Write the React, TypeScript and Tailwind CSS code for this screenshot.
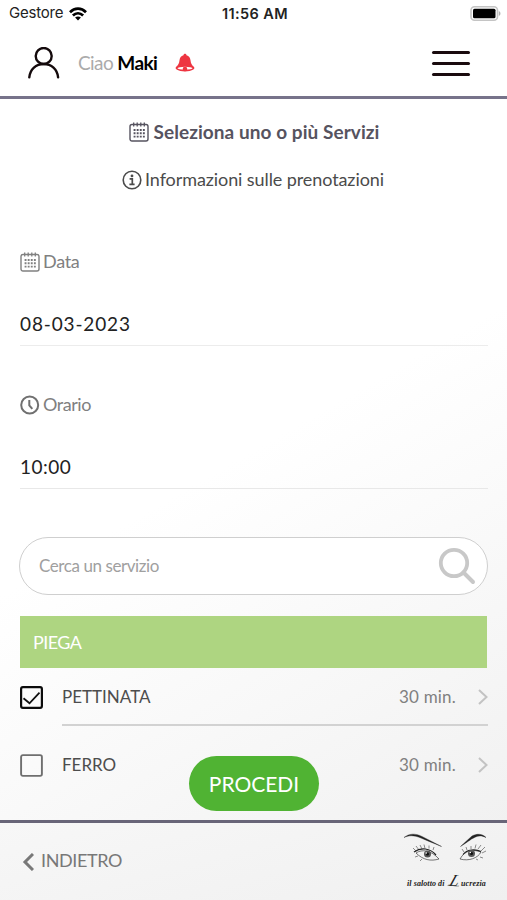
import React, { useState } from 'react';

interface Service {
  id: number;
  name: string;
  duration: string;
}

const SERVICES: Service[] = [
  { id: 1, name: 'PETTINATA', duration: '30 min.' },
  { id: 2, name: 'FERRO', duration: '30 min.' },
];

function WifiIcon() {
  return (
    <svg className="w-[18px] h-[14px] ml-1.5" viewBox="0 0 18 14" fill="none" stroke="#000" strokeWidth="2.7">
      <path d="M1 5.2C5.6.5 12.4.5 17 5.2" />
      <path d="M3.900 8.500c3-2.900 7.200-2.900 10.200 0" />
      <path d="M6.100 10.500c1.700-1.400 4.100-1.400 5.800 0L9 13.500z" fill="#000" stroke="none" />
    </svg>
  );
}

function BatteryIcon() {
  return (
    <svg className="w-[31px] h-[15px]" viewBox="0 0 31 15">
      <rect x="1" y=".8" width="26.500" height="13.400" rx="3.500" fill="#fff" stroke="#c4c4c4" strokeWidth="1.600" />
      <rect x="3" y="2.800" width="22.500" height="9.400" rx="1.500" fill="#000" />
      <path d="M28.800 5c2.200 1 2.200 4 0 5z" fill="#b0b0b0" />
    </svg>
  );
}

function UserIcon() {
  return (
    <svg className="w-8 h-8" viewBox="0 0 32 32" fill="none" stroke="#140a0c" strokeWidth="2.400" strokeLinecap="round">
      <circle cx="15.700" cy="9" r="8" />
      <path d="M1.300 30.300C2.100 22.100 8 17 15.700 17S29.300 22.100 30.100 30.300" />
    </svg>
  );
}

function BellIcon() {
  return (
    <svg className="w-5 h-5" viewBox="0 0 20 20">
      <path
        d="M10 .8c.8 0 1.400.6 1.500 1.400 2.500.8 3.700 2.500 4 5 .4 3.400 1.200 4.600 3.300 6.600.9.900.8 2-.4 2.700C14.500 19 5.500 19 1.600 16.500c-1.200-.7-1.300-1.800-.4-2.700 2.100-2 2.900-3.200 3.300-6.600.3-2.500 1.500-4.200 4-5C8.600 1.400 9.200.8 10 .8z"
        fill="#ee3541"
      />
      <ellipse cx="10" cy="15.200" rx="7.500" ry="1.400" fill="#fff" />
      <circle cx="10" cy="16" r="2.300" fill="#ee3541" />
    </svg>
  );
}

function CalendarIcon({ className }: { className: string }) {
  return (
    <svg className={className} viewBox="0 0 20 20" fill="none" stroke="currentColor">
      <rect x="1" y="2.500" width="18" height="16.500" rx="2" strokeWidth="1.400" />
      <path d="M4.700.5v4M8.200.5v4M11.800.5v4M15.300.5v4" strokeWidth="1.300" />
      <path d="M4.600 8h11.200M4.600 11.300h11.200M4.600 14.600h11.200" strokeWidth="1.900" strokeDasharray="1.900 1.200" />
    </svg>
  );
}

function InfoIcon() {
  return (
    <svg className="w-5 h-5 mt-[2px]" viewBox="0 0 20 20" fill="none" stroke="#4b4b4b">
      <circle cx="10" cy="10" r="8.800" strokeWidth="1.600" />
      <circle cx="10" cy="5.900" r="1.400" fill="#4b4b4b" stroke="none" />
      <path d="M7.600 8.900h2.700v5.200M7.400 14.400h5.200" strokeWidth="1.700" />
    </svg>
  );
}

function ClockIcon() {
  return (
    <svg className="w-5 h-5 mt-[2px]" viewBox="0 0 20 20" fill="none" stroke="#707070">
      <circle cx="9.700" cy="10" r="8.500" strokeWidth="2" />
      <path d="M9.300 5v5.300l3 3.600" strokeWidth="2" />
    </svg>
  );
}

function SearchIcon() {
  return (
    <svg className="w-[38px] h-[38px]" viewBox="0 0 38 38" fill="none" stroke="#c8c8c8">
      <circle cx="16" cy="16" r="13.200" strokeWidth="3.800" />
      <path d="M25.500 25.500L35 35" strokeWidth="4" strokeLinecap="round" />
    </svg>
  );
}

function Checkbox({ checked, onClick }: { checked: boolean; onClick: () => void }) {
  return (
    <button onClick={onClick} className="w-[23px] h-[23px]">
      <svg className="w-[23px] h-[23px]" viewBox="0 0 23 23" fill="none">
        <rect
          x="1.100"
          y="1.100"
          width="20.800"
          height="20.800"
          rx="1.800"
          stroke={checked ? '#0c0c0c' : '#6f6f6f'}
          strokeWidth={checked ? 2.2 : 1.9}
        />
        {checked && <path d="M3.500 12.300l6 5L19.500 6.700" stroke="#111" strokeWidth="1.800" />}
      </svg>
    </button>
  );
}

function Eyes() {
  return (
    <svg className="w-[86px] h-[30px]" viewBox="0 0 86 30" fill="none" stroke="#222">
      {/* brows */}
      <path d="M1 4.500C6 .5 12 0 19 3.500L38.500 13.500C30 10 24 7.500 18 5 11 2 6 2.200 1 4.500z" fill="#222" strokeWidth=".4" />
      <path d="M83 4.500C79 .5 74 .5 69 3L57.500 13.500C64 9.500 67 6.500 72 4.200c4-1.900 7-1.700 11 .3z" fill="#222" strokeWidth=".4" />
      {/* left eye */}
      <path d="M13 20c6-4 15-3 23 6-8 2.500-16 1-23-6z" strokeWidth=".6" />
      <path d="M11 19c7-5 16-4 22 3" strokeWidth="1.200" />
      <circle cx="24.500" cy="21" r="3.500" fill="#555" stroke="none" />
      <circle cx="24.500" cy="21" r="1.600" fill="#111" stroke="none" />
      <circle cx="23.200" cy="20" r=".8" fill="#fff" stroke="none" />
      <path d="M13 18l-3-3M16 17l-3-4M19 16l-2-4M22 15.500l-1-4M26 15.500v-3M30 17l1-3M15 23l-3 1M19 26l-2 2" strokeWidth=".5" />
      {/* right eye */}
      <path d="M57 26c5-9 13-10 21-7-3 6-12 9.500-21 7z" strokeWidth=".6" />
      <path d="M60 21.500c4-5 12-6 18-3" strokeWidth="1.200" />
      <circle cx="68.500" cy="20.500" r="3.500" fill="#555" stroke="none" />
      <circle cx="68.500" cy="20.500" r="1.600" fill="#111" stroke="none" />
      <circle cx="67.300" cy="19.500" r=".8" fill="#fff" stroke="none" />
      <path d="M61 19l-2-3M64 17l-1-3M68 16v-3M72 15.500l1-4M75 16l3-4M78 18l4-4M79 20l4-2M77 24l3 1M73 26l2 1" strokeWidth=".5" />
    </svg>
  );
}

function Logo() {
  return (
    <div className="flex flex-col w-[86px] text-[#222]">
      <Eyes />
      <div className="flex items-baseline h-5 mt-[8px] pl-1 whitespace-nowrap font-['Liberation_Serif',serif] italic font-bold leading-5">
        <span className="text-[8px] tracking-[0.08px]">il salotto di</span>
        {/* swash initial */}
        <span className="relative text-[17px] font-normal ml-[5px] -skew-x-[20deg]">
          L
          <svg className="absolute -left-px bottom-[4px] w-3 h-1" viewBox="0 0 12 4" fill="none" stroke="#555" strokeWidth=".5">
            <path d="M0 2.500c4-2 6 1.500 12 .5" />
          </svg>
        </span>
        <span className="text-[8px] tracking-[0.15px] ml-0.5">ucrezia</span>
      </div>
    </div>
  );
}

export default function App() {
  const [selected, setSelected] = useState<number[]>([1]);

  const toggle = (id: number) =>
    setSelected((prev) => (prev.includes(id) ? prev.filter((s) => s !== id) : [...prev, id]));

  return (
    <div className="relative w-[507px] h-[900px] overflow-hidden flex flex-col whitespace-nowrap font-['Lato',sans-serif] bg-[linear-gradient(150deg,#ffffff_50%,#f8f8f8_72%,#efefef_100%)]">
      {/* Status bar */}
      <div className="h-[27px] shrink-0 bg-white grid grid-cols-3 items-center pl-[9px] pr-[6px] font-['Inter',sans-serif] text-[15px] text-[#222]">
        <div className="flex items-center">
          <span className="tracking-[-0.2px]">Gestore</span>
          <WifiIcon />
        </div>
        <span className="text-center font-semibold text-[14.5px] tracking-[0.4px]">11:56 AM</span>
        <div className="flex justify-end">
          <BatteryIcon />
        </div>
      </div>

      {/* Header */}
      <header className="h-[72px] shrink-0 bg-white border-b-[3px] border-[#77738a] flex items-center pt-[3px] pl-[28px] pr-[37px]">
        <UserIcon />
        <span className="ml-[18px] text-[19px] text-[#ababab] tracking-[-0.6px]">
          Ciao <b className="font-bold text-black">Maki</b>
        </span>
        <span className="ml-[18px]">
          <BellIcon />
        </span>
        <button className="ml-auto flex flex-col gap-2">
          <span className="block w-[38px] h-[3px] rounded-full bg-[#1a0b0e]" />
          <span className="block w-[38px] h-[3px] rounded-full bg-[#1a0b0e]" />
          <span className="block w-[38px] h-[3px] rounded-full bg-[#1a0b0e]" />
        </button>
      </header>

      <main className="flex-1 flex flex-col pl-5 pr-[19px]">
        <div className="mt-[19px] h-7 flex items-center justify-center gap-[5px] text-[#56535f]">
          <CalendarIcon className="w-5 h-5" />
          <h1 className="text-[19px] font-bold tracking-[0.06px]">Seleziona uno o più Servizi</h1>
        </div>
        <div className="mt-[19px] h-7 flex items-center justify-center gap-[3px] pr-[2px] text-[#4b4b4b]">
          <InfoIcon />
          <span className="text-[18px] tracking-[-0.09px]">Informazioni sulle prenotazioni</span>
        </div>

        {/* Date and time */}
        <div className="mt-[54px] h-7 flex items-center gap-[3px] text-[#808080]">
          <CalendarIcon className="w-5 h-5 mt-[2px]" />
          <span className="text-[18px] tracking-[-0.3px]">Data</span>
        </div>
        <div className="mt-[35px] h-[36px] border-b border-[#ececec] text-[19px] leading-7 tracking-[0.86px] text-[#222]">
          08-03-2023
        </div>
        <div className="mt-[44px] h-7 flex items-center gap-[3px] text-[#808080]">
          <ClockIcon />
          <span className="text-[18px] tracking-[-0.45px]">Orario</span>
        </div>
        <div className="mt-[35px] h-[36px] border-b border-[#e8e8e8] text-[19px] leading-7 tracking-[0.5px] text-[#222]">
          10:00
        </div>

        {/* Search */}
        <div className="mt-[48px] -ml-px h-[58px] rounded-full border-[1.5px] border-[#cfcfcf] bg-white flex items-center justify-between pl-[19px] pr-[11px]">
          <span className="text-[17px] tracking-[-0.42px] text-[#a0a0a0]">Cerca un servizio</span>
          <SearchIcon />
        </div>

        <div className="mt-[21px] mr-px h-[52px] bg-[#aed581] flex items-center pl-[13px] text-white text-[18px] tracking-[-0.55px]">
          PIEGA
        </div>

        {SERVICES.map((service) => (
          <div key={service.id} className="flex items-center h-[58px] mb-[10px]">
            <Checkbox checked={selected.includes(service.id)} onClick={() => toggle(service.id)} />
            <div
              className={`ml-[19px] flex-1 h-[58px] flex items-center ${
                service.id === 1 ? 'pt-[2px] border-b-2 border-[#d2d2d2]' : ''
              }`}
            >
              <span className="text-[17px] text-[#4d4d4d]">{service.name}</span>
              <span className="ml-auto text-[17px] tracking-[0.2px] text-[#808080]">{service.duration}</span>
              <svg className="w-[10px] h-[16px] ml-[22px]" viewBox="0 0 10 16" fill="none" stroke="#c3c3c3" strokeWidth="2">
                <path d="M1 1l7.500 7L1 15" />
              </svg>
            </div>
          </div>
        ))}
      </main>

      <button className="absolute left-[189px] top-[756px] w-[130px] h-[55px] rounded-full bg-[#50b333] text-white text-[21px]">
        PROCEDI
      </button>

      {/* Footer */}
      <footer className="h-20 shrink-0 bg-[linear-gradient(165deg,#f7f7f7,#f0f0f0)] border-t-[3px] border-[#686578] flex items-start pl-[22px] pr-[18px]">
        <div className="mt-[25px] h-6 flex items-center gap-[7px] text-[#787878]">
          <svg className="w-3 h-[18px] mt-[3px]" viewBox="0 0 12 18" fill="none" stroke="currentColor" strokeWidth="3">
            <path d="M11 1L3 9l8 8" />
          </svg>
          <span className="text-[18px] tracking-[-0.4px]">INDIETRO</span>
        </div>
        <div className="ml-auto mt-2.5">
          <Logo />
        </div>
      </footer>
    </div>
  );
}
